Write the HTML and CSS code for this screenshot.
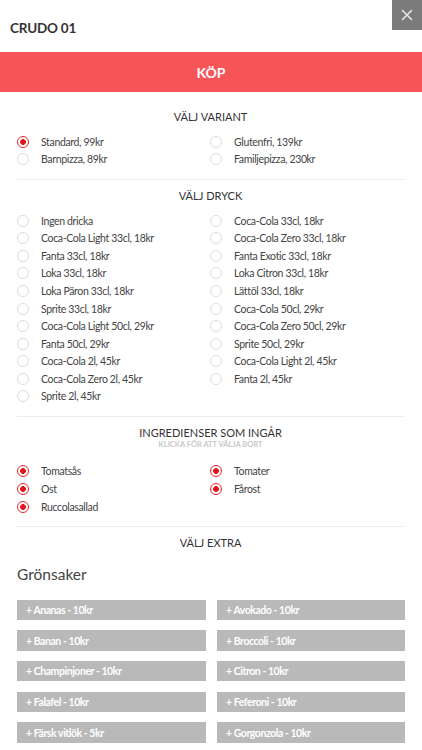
FILE: index.html
```html
<!DOCTYPE html>
<html lang="sv">
<head>
<meta charset="utf-8">
<title>CRUDO 01</title>
<link rel="stylesheet" href="styles.css">
</head>
<body>
<div class="modal">
  <header class="head">
    <h1 class="title">CRUDO 01</h1>
    <button class="close" aria-label="Stäng">
      <svg width="12" height="12" viewBox="0 0 12 12"><path d="M1.5 1.5L10.5 10.5M10.5 1.5L1.5 10.5" stroke="#e6e6e6" stroke-width="1.6" stroke-linecap="round"/></svg>
    </button>
  </header>
  <div class="buy">KÖP</div>

  <section class="sec first">
    <h2 class="sec-title">Välj variant</h2>
    <ul class="opts">
      <li class="opt on"><span class="radio"></span>Standard, 99kr</li>
      <li class="opt"><span class="radio"></span>Glutenfri, 139kr</li>
      <li class="opt"><span class="radio"></span>Barnpizza, 89kr</li>
      <li class="opt"><span class="radio"></span>Familjepizza, 230kr</li>
    </ul>
  </section>

  <section class="sec">
    <h2 class="sec-title">Välj dryck</h2>
    <ul class="opts">
      <li class="opt"><span class="radio"></span>Ingen dricka</li>
      <li class="opt"><span class="radio"></span>Coca-Cola 33cl, 18kr</li>
      <li class="opt"><span class="radio"></span>Coca-Cola Light 33cl, 18kr</li>
      <li class="opt"><span class="radio"></span>Coca-Cola Zero 33cl, 18kr</li>
      <li class="opt"><span class="radio"></span>Fanta 33cl, 18kr</li>
      <li class="opt"><span class="radio"></span>Fanta Exotic 33cl, 18kr</li>
      <li class="opt"><span class="radio"></span>Loka 33cl, 18kr</li>
      <li class="opt"><span class="radio"></span>Loka Citron 33cl, 18kr</li>
      <li class="opt"><span class="radio"></span>Loka Päron 33cl, 18kr</li>
      <li class="opt"><span class="radio"></span>Lättöl 33cl, 18kr</li>
      <li class="opt"><span class="radio"></span>Sprite 33cl, 18kr</li>
      <li class="opt"><span class="radio"></span>Coca-Cola 50cl, 29kr</li>
      <li class="opt"><span class="radio"></span>Coca-Cola Light 50cl, 29kr</li>
      <li class="opt"><span class="radio"></span>Coca-Cola Zero 50cl, 29kr</li>
      <li class="opt"><span class="radio"></span>Fanta 50cl, 29kr</li>
      <li class="opt"><span class="radio"></span>Sprite 50cl, 29kr</li>
      <li class="opt"><span class="radio"></span>Coca-Cola 2l, 45kr</li>
      <li class="opt"><span class="radio"></span>Coca-Cola Light 2l, 45kr</li>
      <li class="opt"><span class="radio"></span>Coca-Cola Zero 2l, 45kr</li>
      <li class="opt"><span class="radio"></span>Fanta 2l, 45kr</li>
      <li class="opt"><span class="radio"></span>Sprite 2l, 45kr</li>
    </ul>
  </section>

  <section class="sec">
    <h2 class="sec-title">Ingredienser som ingår</h2>
    <p class="sec-sub">Klicka för att välja bort</p>
    <ul class="opts">
      <li class="opt on"><span class="radio"></span>Tomatsås</li>
      <li class="opt on"><span class="radio"></span>Tomater</li>
      <li class="opt on"><span class="radio"></span>Ost</li>
      <li class="opt on"><span class="radio"></span>Fårost</li>
      <li class="opt on"><span class="radio"></span>Ruccolasallad</li>
    </ul>
  </section>

  <section class="sec extra">
    <h2 class="sec-title">Välj extra</h2>
    <h3 class="group">Grönsaker</h3>
    <div class="btns">
      <button class="add">+ Ananas - 10kr</button>
      <button class="add">+ Avokado - 10kr</button>
      <button class="add">+ Banan - 10kr</button>
      <button class="add">+ Broccoli - 10kr</button>
      <button class="add">+ Champinjoner - 10kr</button>
      <button class="add">+ Citron - 10kr</button>
      <button class="add">+ Falafel - 10kr</button>
      <button class="add">+ Feferoni - 10kr</button>
      <button class="add">+ Färsk vitlök - 5kr</button>
      <button class="add">+ Gorgonzola - 10kr</button>
    </div>
  </section>
</div>
</body>
</html>
```

FILE: styles.css
```css
* { box-sizing: border-box; }
html, body { margin: 0; padding: 0; background: #fff; }
body {
  font-family: Lato, "Open Sans", "Liberation Sans", sans-serif;
  color: #3a3a3a;
  overflow: hidden;
  height: 750px;
}
.modal { position: relative; width: 422px; }
.head {
  height: 52px;
  display: flex;
  align-items: center;
  padding: 4px 0 0 10px;
}
.title {
  margin: 0;
  font-size: 13.5px;
  font-weight: 700;
  color: #333;
  letter-spacing: -0.2px;
}
.close {
  position: absolute;
  top: 0;
  right: 0;
  width: 30px;
  height: 30px;
  border: 0;
  padding: 0;
  background: #7b7b7b;
  display: flex;
  align-items: center;
  justify-content: center;
}
.buy {
  height: 40px;
  background: #f75457;
  color: #fff;
  font-weight: 700;
  font-size: 14px;
  display: flex;
  align-items: center;
  justify-content: center;
}
.sec {
  margin: 0 18px 0 17px;
  padding: 9px 0 10.5px;
  border-top: 1px solid #ececec;
}
.sec.first { border-top: 0; margin-top: 8.7px; }
.sec-title {
  margin: 0;
  height: 14px;
  line-height: 14px;
  text-align: center;
  text-transform: uppercase;
  font-size: 11px;
  font-weight: 400;
  color: #333;
}
.sec-sub {
  margin: 0 0 13.9px;
  height: 9px;
  line-height: 9px;
  text-align: center;
  text-transform: uppercase;
  font-size: 7.5px;
  font-weight: 700;
  color: #c8c8c8;
}
.opts {
  list-style: none;
  margin: 9.2px 0 0;
  padding: 0;
  display: grid;
  grid-template-columns: 193px 1fr;
}
.opt {
  height: 17.6px;
  display: flex;
  align-items: center;
  font-size: 10.5px;
  letter-spacing: -0.35px;
  color: #444;
}
.radio {
  width: 12px;
  height: 12px;
  border-radius: 50%;
  border: 1px solid #dcdcdc;
  margin-right: 12px;
  flex: none;
  background: #fff;
}
.opt.on .radio {
  border: 1.5px solid #e5262b;
  background: radial-gradient(circle, #e3151b 0 2.6px, #fff 3.1px);
}
.group {
  margin: 13.7px 0 0;
  height: 20px;
  line-height: 20px;
  font-size: 15.5px;
  font-weight: 400;
  color: #444;
}
.btns {
  margin-top: 16px;
  display: grid;
  grid-template-columns: 189px 188px;
  column-gap: 11px;
  row-gap: 10.3px;
}
.add {
  height: 20.4px;
  border: 0;
  background: #b9b9ba;
  color: #fff;
  font-family: inherit;
  font-weight: 700;
  font-size: 10.5px;
  text-align: left;
  padding: 0 0 0 9px;
  letter-spacing: -0.45px;
}
```
